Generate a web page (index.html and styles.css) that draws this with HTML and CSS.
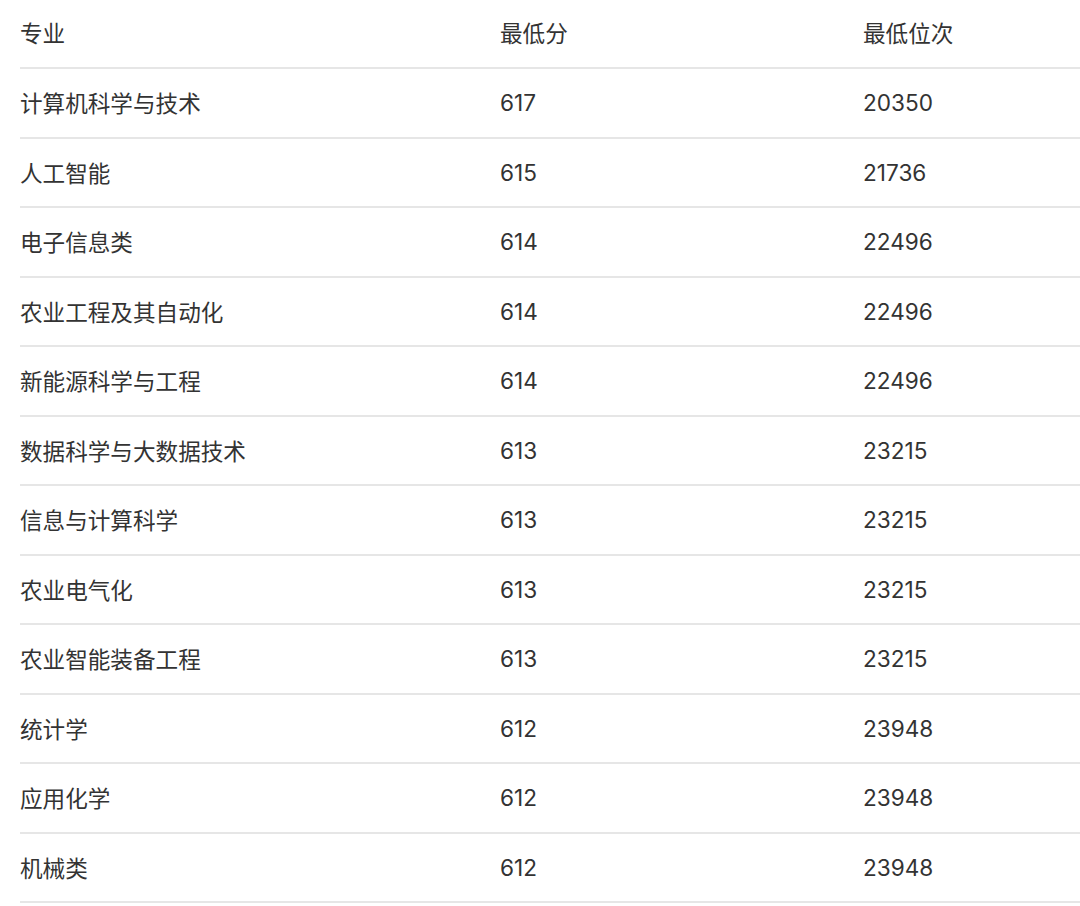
FILE: index.html
```html
<!DOCTYPE html>
<html lang="zh">
<head>
<meta charset="utf-8">
<link rel="stylesheet" href="styles.css">
</head>
<body>
<table class="scores">
  <thead>
    <tr><th>专业</th><th>最低分</th><th>最低位次</th></tr>
  </thead>
  <tbody>
    <tr><td>计算机科学与技术</td><td>617</td><td>20350</td></tr>
    <tr><td>人工智能</td><td>615</td><td>21736</td></tr>
    <tr><td>电子信息类</td><td>614</td><td>22496</td></tr>
    <tr><td>农业工程及其自动化</td><td>614</td><td>22496</td></tr>
    <tr><td>新能源科学与工程</td><td>614</td><td>22496</td></tr>
    <tr><td>数据科学与大数据技术</td><td>613</td><td>23215</td></tr>
    <tr><td>信息与计算科学</td><td>613</td><td>23215</td></tr>
    <tr><td>农业电气化</td><td>613</td><td>23215</td></tr>
    <tr><td>农业智能装备工程</td><td>613</td><td>23215</td></tr>
    <tr><td>统计学</td><td>612</td><td>23948</td></tr>
    <tr><td>应用化学</td><td>612</td><td>23948</td></tr>
    <tr><td>机械类</td><td>612</td><td>23948</td></tr>
  </tbody>
</table>
</body>
</html>
```
FILE: styles.css
```css
html, body {
  margin: 0;
  padding: 0;
  background: #ffffff;
}
body {
  padding-left: 20px;
  overflow: hidden;
}
.scores {
  border-collapse: collapse;
  width: 1060px;
  table-layout: fixed;
  font-family: "Inter", "Noto Sans CJK SC", sans-serif;
  font-size: 22.6px;
  color: #333333;
}
.scores th,
.scores td {
  text-align: left;
  font-weight: normal;
  padding: 0;
  vertical-align: middle;
  border-bottom: 2px solid #e6e6e6;
}
.scores th {
  height: 65px;
  padding-bottom: 2px;
}
.scores td {
  height: 67.5px;
}
.scores th:nth-child(1) { width: 480px; }
.scores th:nth-child(2) { width: 363px; }
```
